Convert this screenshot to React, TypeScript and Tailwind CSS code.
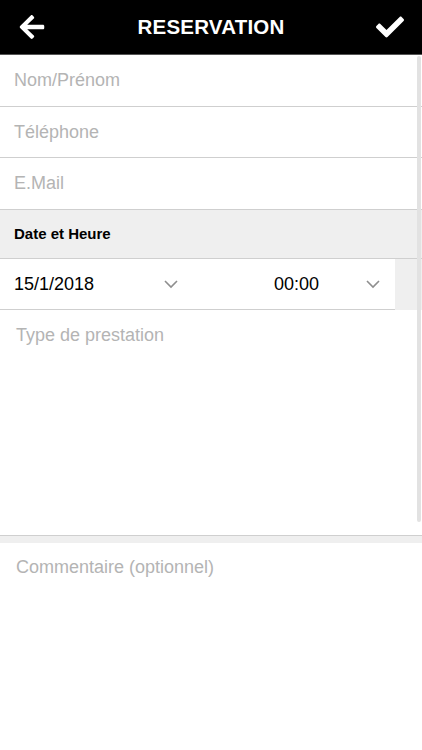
import { FaArrowLeft, FaCheck } from 'react-icons/fa';

const font = { fontFamily: '"Liberation Sans", Arial, sans-serif' };

const Field = ({ label, h }: { label: string; h: string }) => (
  <div className={`${h} flex items-center px-[14px] border-b border-[#cfcfcf]`}>
    <span className="text-[18px] text-[#b4b4b4]">{label}</span>
  </div>
);

const Chevron = () => (
  <svg width="16" height="10" viewBox="0 0 16 10" fill="none" stroke="#8e8e8e" strokeWidth="1.6">
    <path d="M2 2l6 6 6-6" />
  </svg>
);

export default function App() {
  return (
    <div className="w-[422px] h-[750px] bg-white relative overflow-hidden" style={font}>
      <header className="h-[55px] bg-black border-b border-[#555] flex items-center justify-between px-[18px]">
        <FaArrowLeft className="text-white" size={28} />
        <h1 className="text-white font-bold text-[20.5px] tracking-[0.2px]">RESERVATION</h1>
        <FaCheck className="text-white" size={28} />
      </header>

      <Field label="Nom/Prénom" h="h-[52px]" />
      <Field label="Téléphone" h="h-[51px]" />
      <Field label="E.Mail" h="h-[52px]" />

      <div className="h-[49px] bg-[#efefef] flex items-center px-[14px] border-b border-[#cfcfcf]">
        <span className="text-[15px] font-bold text-black">Date et Heure</span>
      </div>

      <div className="flex h-[51px] bg-[#efefef]">
        <div className="w-[395px] bg-white border-b border-[#cfcfcf] flex items-center">
          <div className="w-[193px] pl-[14px] pr-[14px] flex items-center justify-between">
            <span className="text-[18px] text-black">15/1/2018</span>
            <Chevron />
          </div>
          <div className="flex-1 pl-[81px] pr-[14px] flex items-center justify-between">
            <span className="text-[18px] text-black">00:00</span>
            <Chevron />
          </div>
        </div>
      </div>

      <div className="h-[226px] border-b border-[#cfcfcf] px-[16px] pt-[12px]">
        <span className="text-[18px] text-[#b4b4b4]">Type de prestation</span>
      </div>
      <div className="h-[7px] bg-[#efefef]" />
      <div className="px-[16px] pt-[11px]">
        <span className="text-[18px] text-[#b4b4b4]">Commentaire (optionnel)</span>
      </div>

      <div className="absolute right-[1px] top-[56px] w-[4px] h-[466px] bg-[#e2e2e2] rounded-full" />
    </div>
  );
}
